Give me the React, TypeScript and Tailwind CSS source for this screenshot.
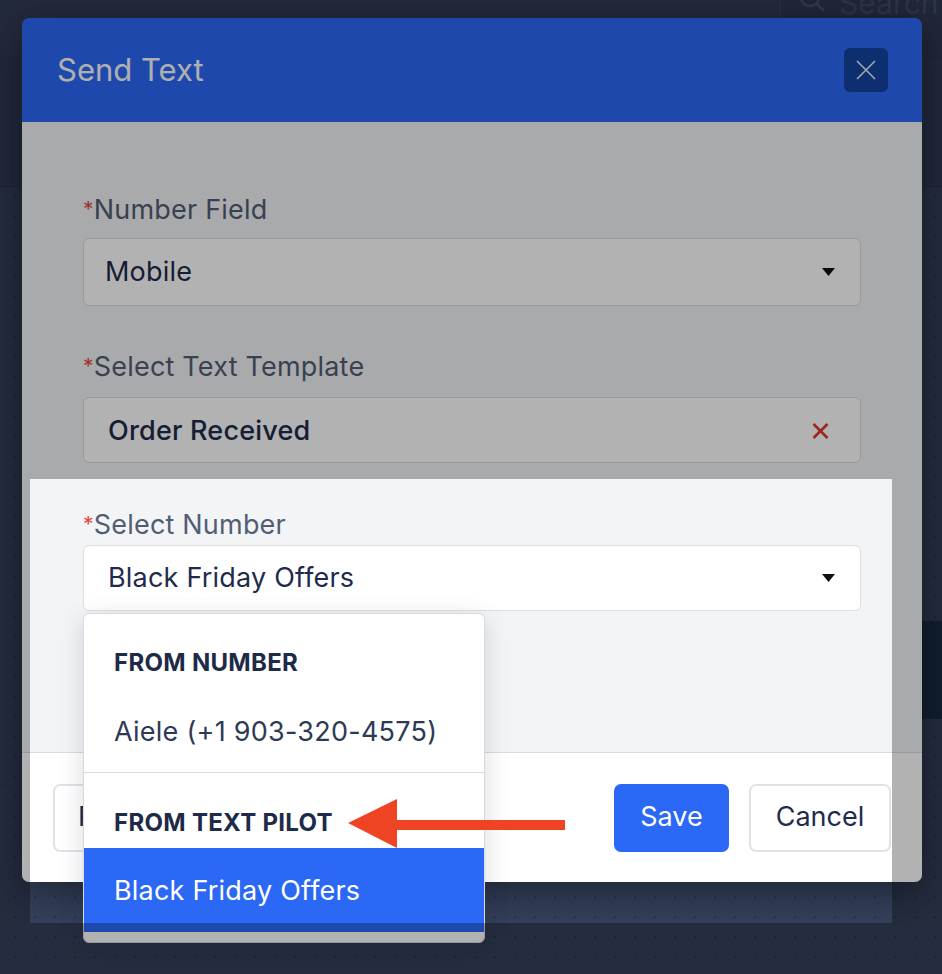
import React from 'react'

const font = "font-['Inter','Noto_Sans',sans-serif]"

function Caret() {
  return (
    <svg width="13" height="8" viewBox="0 0 13 8">
      <polygon points="0,0 13,0 6.5,8" fill="#111" />
    </svg>
  )
}

function Label({ text }: { text: string }) {
  return (
    <div className="text-[27px] leading-[32px] text-[#525d74] tracking-[0.2px]">
      <span className="text-[#e5483d] text-[21px] align-top">*</span>
      {text}
    </div>
  )
}

function Background() {
  return (
    <div className="flex flex-col h-full">
      {/* app top bar */}
      <div className="h-[58px] flex bg-[#333d57] border-b border-[#2c3650]">
        <div className="flex-1" />
        <div className="w-[162px] border-l border-[#3b4660] bg-[#2f3951] flex items-start pl-[18px] gap-[14px] -mt-[14px]">
          <svg width="26" height="30" viewBox="0 0 26 30" fill="none" stroke="#46516b" strokeWidth="2.5">
            <circle cx="11" cy="11" r="9" />
            <line x1="18" y1="18" x2="25" y2="25" />
          </svg>
          <span className="text-[30px] leading-[34px] text-[#414c66]">Search</span>
        </div>
      </div>
      {/* sub bar */}
      <div className="h-[129px] bg-[#313b55] border-b border-[#2c3650]" />
      {/* canvas */}
      <div className="flex-1 flex flex-col bg-[#35405b] bg-[radial-gradient(#2b344d_1.2px,transparent_1.2px)] bg-[length:20px_20px] bg-[position:5px_0px]">
        <div className="h-[434px]" />
        <div className="flex justify-end">
          <div className="w-[21px] h-[98px] bg-[#1b2c44]" />
        </div>
        <div className="h-[72px] border-b border-[#3a4560]" />
      </div>
    </div>
  )
}

function Dropdown() {
  return (
    <div className="absolute left-[-1px] top-[67px] w-[402px] bg-white border border-[#d6d9de] rounded-[6px] shadow-[0_6px_24px_rgba(20,30,50,0.16)] z-10 pb-[10px]">
      <div className="pl-[30px] pt-[35px] text-[24px] leading-[28px] font-bold text-[#1d2a48] tracking-[0.3px]">FROM NUMBER</div>
      <div className="pl-[30px] mt-[39px] text-[27px] leading-[32px] tracking-[0.25px] text-[#2e3a55] pb-[24px]">Aiele (+1 903-320-4575)</div>
      <div className="border-t border-[#d9dce1]" />
      <div className="pl-[30px] pt-[36px] text-[24px] leading-[28px] font-bold text-[#1d2a48] tracking-[0.3px]">FROM TEXT PILOT</div>
      <div className="mt-[11px] h-[84px] bg-[#2b68f5] flex items-center pl-[30px] pt-[3px] text-[27px] tracking-[0.2px] text-white">Black Friday Offers</div>
    </div>
  )
}

function Modal() {
  return (
    <div className="absolute left-[22px] top-[18px] w-[900px] h-[864px] rounded-[7px] shadow-[0_10px_40px_rgba(0,0,0,0.45)] flex flex-col">
      <div className="h-[104px] bg-[#2b68f5] rounded-t-[7px] flex items-center justify-between pl-[35px] pr-[34px]">
        <span className="text-[31px] text-[#fbfbfd]">Send Text</span>
        <button className="w-[44px] h-[44px] rounded-[6px] bg-[#1443a0] flex items-center justify-center">
          <svg width="20" height="20" viewBox="0 0 20 20" stroke="#eef0f8" strokeWidth="1.6">
            <line x1="1" y1="1" x2="19" y2="19" />
            <line x1="19" y1="1" x2="1" y2="19" />
          </svg>
        </button>
      </div>
      <div className="h-[630px] bg-[#f3f4f6] px-[61px] pt-[72px] flex flex-col">
        <Label text="Number Field" />
        <div className="mt-[12px] h-[68px] bg-white border border-[#d8dbe0] rounded-[6px] flex items-center justify-between pl-[21px] pr-[25px] text-[27px] tracking-[0.2px] text-[#1f2b4d]">
          <span>Mobile</span>
          <Caret />
        </div>
        <div className="mt-[45px]">
          <Label text="Select Text Template" />
        </div>
        <div className="mt-[14px] h-[66px] bg-white border border-[#d8dbe0] rounded-[6px] flex items-center justify-between pl-[24px] pr-[31px] pt-[2px] text-[27px] tracking-[0.2px] font-medium text-[#1f2b4d]">
          <span>Order Received</span>
          <svg width="17" height="16" viewBox="0 0 17 16" stroke="#e0382e" strokeWidth="2.6">
            <line x1="1.5" y1="1" x2="15.5" y2="15" />
            <line x1="15.5" y1="1" x2="1.5" y2="15" />
          </svg>
        </div>
        <div className="mt-[46px]">
          <Label text="Select Number" />
        </div>
        <div className="relative mt-[4px] h-[66px] bg-white border border-[#dcdfe4] rounded-[6px] flex items-center justify-between pl-[24px] pr-[25px] text-[27px] tracking-[0.2px] text-[#1f2b4d]">
          <span>Black Friday Offers</span>
          <Caret />
          <Dropdown />
        </div>
      </div>
      <div className="h-[130px] bg-white border-t border-[#d9dbe0] rounded-b-[7px] flex items-center px-[31px]">
        <button className="h-[68px] pl-[23px] pr-[26px] border-2 border-[#e0e2e7] rounded-[7px] text-[27px] text-[#1f2b4d]">Preview</button>
        <button className="ml-auto h-[68px] w-[115px] rounded-[7px] bg-[#2b68f5] text-[27px] text-white">Save</button>
        <button className="ml-[20px] h-[68px] w-[142px] rounded-[7px] border-2 border-[#e0e2e7] bg-white text-[27px] text-[#1f2b4d]">Cancel</button>
      </div>
    </div>
  )
}

export default function App() {
  return (
    <div className={`relative w-[942px] h-[974px] overflow-hidden ${font}`}>
      <Background />
      <Modal />
      {/* spotlight overlay */}
      <div className="absolute left-[30px] top-[479px] w-[862px] h-[444px] pointer-events-none z-20 shadow-[0_0_0_2000px_rgba(0,0,0,0.3)]" />
      {/* annotation arrow */}
      <svg className="absolute left-[348px] top-[799px] z-30" width="217" height="50" viewBox="0 0 217 50">
        <polygon points="0,24 49,0 49,49" fill="#ee4423" />
        <rect x="48" y="21" width="169" height="10" fill="#ee4423" />
      </svg>
    </div>
  )
}
